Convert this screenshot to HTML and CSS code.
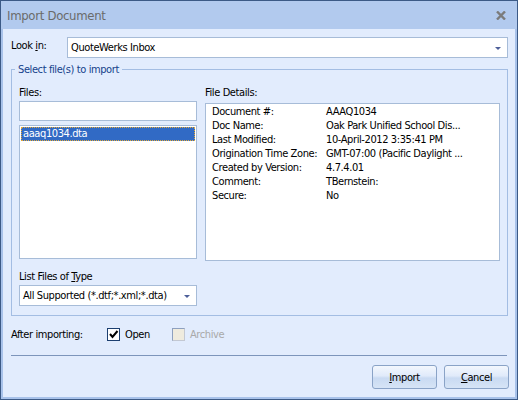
FILE: index.html
```html
<!DOCTYPE html>
<html>
<head>
<meta charset="utf-8">
<title>Import Document</title>
<link rel="stylesheet" href="styles.css">
</head>
<body>
<div class="window">
  <div class="titlebar">
    <span class="title">Import Document</span>
    <svg class="close" width="10" height="9" viewBox="0 0 10 9"><path d="M1 0.5 L9 8.5 M9 0.5 L1 8.5" stroke="#7b7b7b" stroke-width="2.4" fill="none"/></svg>
  </div>
  <div class="client">
    <div class="lookin-row">
      <span class="lookin-label">Look <u>i</u>n:</span>
      <div class="combo combo-wide"><span class="combo-text">QuoteWerks Inbox</span><span class="arrow"></span></div>
    </div>
    <fieldset class="group">
      <legend class="group-legend">Select file(s) to import</legend>
      <div class="cols">
        <div class="col-left">
          <div class="lbl">Files:</div>
          <div class="textbox"></div>
          <div class="listbox"><div class="item item-sel">aaaq1034.dta</div></div>
        </div>
        <div class="col-right">
          <div class="lbl">File Details:</div>
          <div class="details">
            <div class="drow"><span class="dkey">Document #:</span><span class="dval">AAAQ1034</span></div>
            <div class="drow"><span class="dkey">Doc Name:</span><span class="dval">Oak Park Unified School Dis...</span></div>
            <div class="drow"><span class="dkey">Last Modified:</span><span class="dval">10-April-2012 3:35:41 PM</span></div>
            <div class="drow"><span class="dkey">Origination Time Zone:</span><span class="dval">GMT-07:00 (Pacific Daylight ...</span></div>
            <div class="drow"><span class="dkey">Created by Version:</span><span class="dval">4.7.4.01</span></div>
            <div class="drow"><span class="dkey">Comment:</span><span class="dval">TBernstein:</span></div>
            <div class="drow"><span class="dkey">Secure:</span><span class="dval">No</span></div>
          </div>
        </div>
      </div>
      <div class="lbl lbl-type">List Files of <u>T</u>ype</div>
      <div class="combo combo-narrow"><span class="combo-text">All Supported (*.dtf;*.xml;*.dta)</span><span class="arrow"></span></div>
    </fieldset>
    <div class="after-row">
      <span class="after-label">After importing:</span>
      <span class="check check-open"><span class="box box-on"><svg width="11" height="11" viewBox="0 0 11 11"><path d="M2 5 L4.5 8 L9.5 2" stroke="#000" stroke-width="2" fill="none"/></svg></span><span class="check-text">Open</span></span>
      <span class="check check-archive"><span class="box box-off"></span><span class="check-text check-disabled">Archive</span></span>
    </div>
    <div class="sep"></div>
    <div class="buttons">
      <div class="btn"><u>I</u>mport</div>
      <div class="btn"><u>C</u>ancel</div>
    </div>
  </div>
</div>
</body>
</html>
```
FILE: styles.css
```css
* { box-sizing: border-box; }
html, body { margin: 0; padding: 0; }
body {
  width: 518px;
  height: 400px;
  font-family: "DejaVu Sans Condensed", "Liberation Sans", sans-serif;
  font-size: 11px;
  letter-spacing: -0.4px;
  color: #000;
  background: #e2ecfd;
}
.window {
  width: 518px;
  height: 400px;
  border: 1px solid #3c5a86;
  background: #a8c2ea;
  display: flex;
  flex-direction: column;
}
.titlebar {
  height: 28px;
  background: #b2caee;
  display: flex;
  align-items: center;
  justify-content: space-between;
  padding: 0 11px 0 6px;
}
.title {
  font-size: 13px;
  color: #6a6a6a;
  letter-spacing: -0.3px;
  padding-top: 1px;
}
.close { display: block; margin-top: 1px; }
.client {
  flex: 1;
  margin: 0 2px 2px 2px;
  background: #e2ecfd;
  padding: 8px 6px 0 8px;
  display: flex;
  flex-direction: column;
}
.lookin-row {
  display: flex;
  align-items: flex-start;
}
.lookin-label {
  width: 56px;
  line-height: 13px;
  padding-top: 2px;
}
.combo {
  height: 21px;
  background: #fff;
  border: 1px solid #a7bcd8;
  display: flex;
  align-items: center;
  justify-content: space-between;
  padding: 0 6px 0 3px;
}
.combo-wide { width: 441px; }
.combo-narrow { width: 178px; margin-top: 2px; }
.combo-text { line-height: 13px; }
.arrow {
  width: 0; height: 0;
  border-left: 3px solid transparent;
  border-right: 3px solid transparent;
  border-top: 3px solid #4d5f99;
  margin-top: 2px;
}
.group {
  margin: 5px 0 0 0;
  width: 497px;
  border: 1px solid #a3bde3;
  padding: 0 8px 9px 7px;
  min-width: 0;
}
.group-legend {
  color: #15428b;
  line-height: 13px;
  padding: 0 3px;
  margin-left: -4px;
}
.cols {
  display: grid;
  grid-template-columns: 178px 295px;
  column-gap: 8px;
  margin-top: 10px;
}
.lbl { line-height: 13px; }
.textbox {
  height: 20px;
  margin-top: 2px;
  background: #fff;
  border: 1px solid #a7bcd8;
}
.listbox {
  height: 134px;
  margin-top: 4px;
  background: #fff;
  border: 1px solid #a7bcd8;
  padding: 1px;
}
.item {
  height: 14px;
  line-height: 13px;
  padding-left: 2px;
}
.item-sel {
  background: #316ac5;
  color: #fff;
  outline: 1px dotted #e2a83a;
  outline-offset: -1px;
}
.details {
  height: 158px;
  margin-top: 4px;
  background: #fff;
  border: 1px solid #a7bcd8;
  padding: 1px 0 0 6px;
}
.drow {
  display: grid;
  grid-template-columns: 114px 1fr;
  line-height: 14px;
  white-space: nowrap;
}
.lbl-type { margin-top: 9px; }
.after-row {
  display: flex;
  align-items: center;
  margin-top: 11px;
  height: 14px;
}
.after-label { width: 96px; }
.check { display: flex; align-items: center; }
.check-open { width: 65px; }
.box {
  width: 13px;
  height: 13px;
  display: flex;
  align-items: center;
  justify-content: center;
}
.box-on {
  background: #fff;
  border: 1px solid #1c3f70;
}
.box-off {
  background: #efebde;
  border: 1px solid #c3c8d2;
  border-top-color: #8ea0bf;
  border-left-color: #8ea0bf;
}
.check-text { margin-left: 5px; }
.check-disabled { color: #a9a9a9; }
.sep {
  margin-top: 14px;
  height: 1px;
  width: 496px;
  background: #7d95bb;
}
.buttons {
  display: flex;
  justify-content: flex-end;
  gap: 7px;
  margin-top: 9px;
  padding-right: 0;
}
.btn {
  width: 65px;
  height: 24px;
  border: 1px solid #8aa3c7;
  border-radius: 3px;
  background: linear-gradient(#f3f7fd, #e0eafa 45%, #c9daf2 55%, #d6e4f6);
  display: flex;
  align-items: center;
  justify-content: center;
  line-height: 13px;
}
```
